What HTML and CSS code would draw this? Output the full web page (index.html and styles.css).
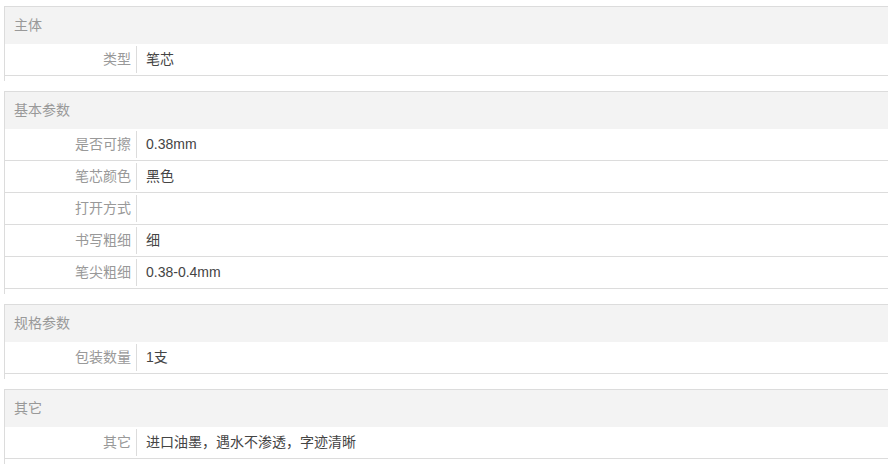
FILE: index.html
```html
<!DOCTYPE html>
<html lang="zh-CN">
<head>
<meta charset="utf-8">
<title>规格与包装</title>
<link rel="stylesheet" href="styles.css">
</head>
<body>
<div class="spec">
  <div class="group">
    <h3 class="group-title">主体</h3>
    <dl class="row"><dt class="label">类型</dt><dd class="value">笔芯</dd></dl>
  </div>
  <div class="group">
    <h3 class="group-title">基本参数</h3>
    <dl class="row"><dt class="label">是否可擦</dt><dd class="value">0.38mm</dd></dl>
    <dl class="row"><dt class="label">笔芯颜色</dt><dd class="value">黑色</dd></dl>
    <dl class="row"><dt class="label">打开方式</dt><dd class="value"></dd></dl>
    <dl class="row"><dt class="label">书写粗细</dt><dd class="value">细</dd></dl>
    <dl class="row"><dt class="label">笔尖粗细</dt><dd class="value">0.38-0.4mm</dd></dl>
  </div>
  <div class="group">
    <h3 class="group-title">规格参数</h3>
    <dl class="row"><dt class="label">包装数量</dt><dd class="value">1支</dd></dl>
  </div>
  <div class="group">
    <h3 class="group-title">其它</h3>
    <dl class="row"><dt class="label">其它</dt><dd class="value">进口油墨，遇水不渗透，字迹清晰</dd></dl>
  </div>
</div>
</body>
</html>
```
FILE: styles.css
```css
html, body {
  margin: 0;
  padding: 0;
  background: #fff;
}
body {
  font-family: "Liberation Sans", Arial, "Noto Sans CJK SC", sans-serif;
  font-size: 14px;
  color: #333;
}
.spec {
  padding: 6px 3px 0 4px;
}
.group {
  border-top: 1px solid #dcdcdc;
  border-left: 1px solid #dcdcdc;
  padding-bottom: 5px;
  margin-bottom: 10px;
}
.group-title {
  margin: 0;
  height: 37px;
  line-height: 37px;
  background: #f3f3f3;
  padding-left: 9px;
  font-size: 14px;
  font-weight: normal;
  color: #999;
}
.row {
  display: flex;
  margin: 0;
  height: 32px;
  padding: 2px 0;
  box-sizing: border-box;
  border-bottom: 1px solid #dcdcdc;
}
.label {
  width: 131px;
  flex: none;
  box-sizing: border-box;
  padding-right: 5px;
  text-align: right;
  color: #999;
  line-height: 27px;
}
.value {
  margin: 0;
  flex: 1;
  border-left: 1px solid #dcdcdc;
  padding-left: 9px;
  line-height: 27px;
  color: #444;
}
```
